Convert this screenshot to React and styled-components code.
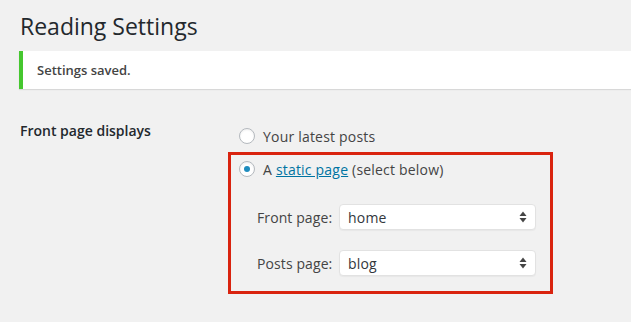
import React from 'react';
import styled, { createGlobalStyle } from 'styled-components';

const GlobalStyle = createGlobalStyle`
  html, body {
    margin: 0;
    padding: 0;
    background: #f1f1f1;
    overflow: hidden;
  }
  body {
    font-family: "Open Sans", "Liberation Sans", sans-serif;
    color: #444;
  }
`;

const Page = styled.div`
  padding-left: 20px;
  height: 322px;
  box-sizing: border-box;
`;

const Title = styled.h1`
  margin: 0;
  padding-top: 12px;
  font-size: 23px;
  font-weight: 400;
  line-height: 29px;
  color: #23282d;
`;

const Notice = styled.div`
  margin: 10px 0 0 -1px;
  height: 38px;
  display: flex;
  align-items: center;
  padding-left: 14px;
  background: #fff;
  border-left: 4px solid #45c72f;
  box-shadow: 0 1px 1px rgba(0, 0, 0, 0.1);
  font-size: 13px;
  font-weight: 600;
  color: #444;
  padding-bottom: 1px;
  box-sizing: border-box;
`;

const FormTable = styled.div`
  display: grid;
  grid-template-columns: 219px 1fr;
  margin-top: 33px;
`;

const RowLabel = styled.div`
  font-size: 14px;
  font-weight: 600;
  line-height: 18px;
  color: #23282d;
`;

const Options = styled.div`
  display: flex;
  flex-direction: column;
  align-items: flex-start;
  padding-top: 5px;
`;

const RadioRow = styled.label`
  display: flex;
  align-items: center;
  gap: 8px;
  height: 19px;
  font-size: 14px;
  line-height: 19px;
  letter-spacing: 0.2px;
  color: #444;
`;

const Radio = styled.span`
  width: 16px;
  height: 16px;
  box-sizing: border-box;
  border-radius: 50%;
  border: 1px solid #b4b9be;
  background: #fff;
  box-shadow: inset 0 1px 2px rgba(0, 0, 0, 0.07);
  display: flex;
  align-items: center;
  justify-content: center;
  margin-top: -1px;

  &::after {
    content: '';
    display: ${p => (p.checked ? 'block' : 'none')};
    width: 6px;
    height: 6px;
    border-radius: 50%;
    background: #1e8cbe;
  }
`;

const Link = styled.a`
  color: #0074a2;
  text-decoration: underline;
`;

const Highlight = styled.div`
  margin: 6px 0 0 -11px;
  border: 3px solid #d9230f;
  padding: 5px 14px 15px 8px;
`;

const Fields = styled.div`
  display: grid;
  grid-template-columns: 75px 197px;
  column-gap: 7px;
  row-gap: 20px;
  margin: 25px 0 0 18px;
  align-items: center;
`;

const FieldLabel = styled.span`
  font-size: 14px;
  letter-spacing: 0.1px;
  color: #444;
  white-space: nowrap;
  margin-top: 1px;
`;

const Select = styled.div`
  height: 26px;
  box-sizing: border-box;
  background: #fff;
  border: 1px solid #e2e2e2;
  border-radius: 4px;
  box-shadow: 0 1px 1px rgba(0, 0, 0, 0.04);
  display: flex;
  align-items: center;
  justify-content: space-between;
  padding: 0 8px 0 8px;
  font-size: 14px;
  letter-spacing: 0.2px;
  color: #32373c;
`;

const Arrows = () => (
  <svg width="8" height="12" viewBox="0 0 8 12">
    <path d="M4 0.5 L7.5 5 H0.5 Z" fill="#444" />
    <path d="M4 11.5 L7.5 7 H0.5 Z" fill="#444" />
  </svg>
);

export default function App() {
  return (
    <>
      <GlobalStyle />
      <Page>
        <Title>Reading Settings</Title>
        <Notice>Settings saved.</Notice>
        <FormTable>
          <RowLabel>Front page displays</RowLabel>
          <Options>
            <RadioRow>
              <Radio />
              Your latest posts
            </RadioRow>
            <Highlight>
              <RadioRow>
                <Radio checked />
                <span>
                  A <Link href="#">static page</Link> (select below)
                </span>
              </RadioRow>
              <Fields>
                <FieldLabel>Front page:</FieldLabel>
                <Select>
                  home
                  <Arrows />
                </Select>
                <FieldLabel>Posts page:</FieldLabel>
                <Select>
                  blog
                  <Arrows />
                </Select>
              </Fields>
            </Highlight>
          </Options>
        </FormTable>
      </Page>
    </>
  );
}
